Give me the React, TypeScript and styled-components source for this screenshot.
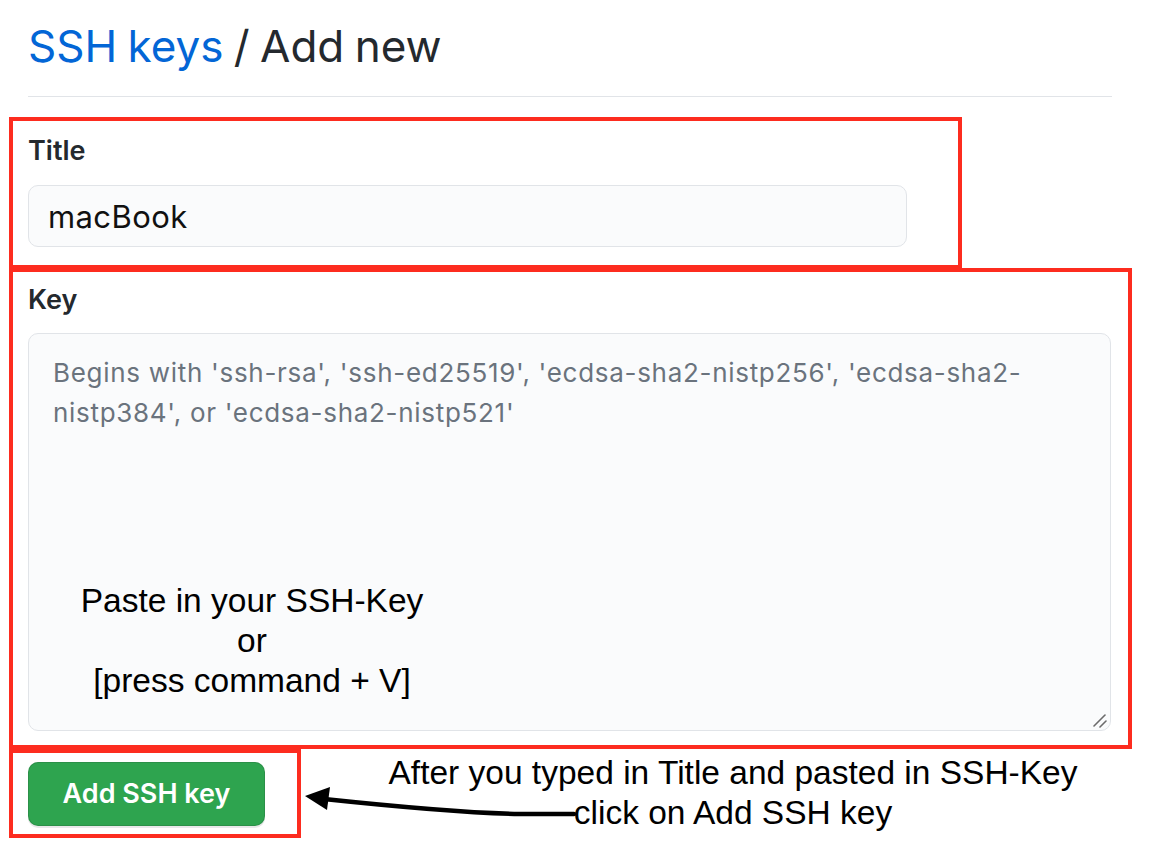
import React from "react";
import styled, { createGlobalStyle } from "styled-components";

const GlobalStyle = createGlobalStyle`
  html, body {
    margin: 0;
    padding: 0;
    background: #ffffff;
  }
  body {
    font-family: Inter, "Noto Sans", "Liberation Sans", sans-serif;
    color: #24292e;
  }
  * { box-sizing: border-box; }
`;

const RED = "#fd2c1f";

const Page = styled.div`
  padding: 19px 0 24px 9px;
  width: 1152px;
`;

const Subhead = styled.div`
  margin-left: 19px;
  width: 1084px;
  padding-bottom: 23px;
  border-bottom: 1px solid #e1e4e8;
`;

const Heading = styled.h1`
  margin: 0;
  font-family: Inter, "Liberation Sans", sans-serif;
  font-size: 44px;
  font-weight: 400;
  line-height: 54px;
  color: #24292e;
  letter-spacing: 0px;
  word-spacing: -2px;
`;

const Crumb = styled.a`
  color: #0366d6;
  text-decoration: none;
`;

const Form = styled.form`
  display: flex;
  flex-direction: column;
  align-items: flex-start;
  margin-top: 20px;
`;

const Highlight = styled.div<{ $w: number; $overlap?: number }>`
  width: ${(p) => p.$w}px;
  border: 4px solid ${RED};
  margin-top: ${(p) => -(p.$overlap ?? 0)}px;
  position: relative;
`;

const Group = styled.div<{ $top: number; $bottom: number }>`
  display: flex;
  flex-direction: column;
  align-items: flex-start;
  padding: ${(p) => p.$top}px 0 ${(p) => p.$bottom}px 15px;
`;

const Label = styled.label<{ $gap: number }>`
  display: block;
  font-family: Inter, "Liberation Sans", sans-serif;
  font-size: 27px;
  font-weight: 600;
  line-height: 32px;
  color: #24292e;
  margin-bottom: ${(p) => p.$gap}px;
`;

const TextInput = styled.input`
  width: 879px;
  height: 62px;
  padding: 0 19px;
  border: 1px solid #e1e4e8;
  border-radius: 10px;
  background: #fafbfc;
  font-family: Inter, "Liberation Sans", sans-serif;
  font-size: 31px;
  line-height: 60px;
  letter-spacing: 0.4px;
  color: #111;
  outline: none;
`;

const TextArea = styled.div`
  position: relative;
  width: 1083px;
  height: 398px;
  padding: 19px 24px;
  border: 1px solid #e1e4e8;
  border-radius: 10px;
  background: #fafbfc;
`;

const Placeholder = styled.div`
  font-family: Inter, "Liberation Sans", sans-serif;
  font-size: 26px;
  line-height: 40px;
  letter-spacing: 0.7px;
  color: #6a737d;
  white-space: nowrap;
`;

const PasteNote = styled.div`
  position: absolute;
  left: 0;
  top: 247px;
  width: 446px;
  text-align: center;
  font-family: "Liberation Sans", Arial, sans-serif;
  font-size: 33.5px;
  line-height: 40px;
  color: #000;
`;

const Grip = styled.svg`
  position: absolute;
  right: 2px;
  bottom: 2px;
`;

const ActionRow = styled.div`
  display: flex;
  align-items: flex-start;
  position: relative;
`;

const Button = styled.button`
  width: 237px;
  height: 64px;
  padding: 0;
  border: 1px solid rgba(27, 31, 35, 0.15);
  border-radius: 10px;
  background: #2ea44f;
  box-shadow: 0 2px 0 rgba(27, 31, 35, 0.1);
  color: #ffffff;
  font-family: Inter, "Liberation Sans", sans-serif;
  font-size: 27px;
  font-weight: 600;
  line-height: 62px;
  cursor: pointer;
`;

const Hint = styled.div`
  margin: 4px 0 0 72px;
  width: 720px;
  text-align: center;
  font-family: "Liberation Sans", Arial, sans-serif;
  font-size: 33.5px;
  line-height: 40px;
  color: #000;
`;

const Arrow = styled.svg`
  position: absolute;
  left: 291px;
  top: 31px;
  overflow: visible;
`;

export default function App() {
  return (
    <>
      <GlobalStyle />
      <Page>
        <Subhead>
          <Heading>
            <Crumb href="#">SSH keys</Crumb> / Add new
          </Heading>
        </Subhead>
        <Form onSubmit={(e) => e.preventDefault()}>
          <Highlight $w={953}>
            <Group $top={14} $bottom={18}>
              <Label $gap={18} htmlFor="title">Title</Label>
              <TextInput id="title" defaultValue="macBook" />
            </Group>
          </Highlight>
          <Highlight $w={1123} $overlap={1}>
            <Group $top={12} $bottom={14}>
              <Label $gap={17}>Key</Label>
              <TextArea>
                <Placeholder>
                  Begins with 'ssh-rsa', 'ssh-ed25519', 'ecdsa-sha2-nistp256', 'ecdsa-sha2-
                  <br />
                  nistp384', or 'ecdsa-sha2-nistp521'
                </Placeholder>
                <PasteNote>
                  Paste in your SSH-Key
                  <br />
                  or
                  <br />
                  [press command + V]
                </PasteNote>
                <Grip width="16" height="16" viewBox="0 0 16 16">
                  <path d="M2 14 L13 3" stroke="#6b6b6b" strokeWidth="1.6" strokeLinecap="round" />
                  <path d="M8 15 L14 9" stroke="#6b6b6b" strokeWidth="1.6" strokeLinecap="round" />
                </Grip>
              </TextArea>
            </Group>
          </Highlight>
          <ActionRow>
            <Highlight $w={292}>
              <Group $top={9} $bottom={8}>
                <Button type="submit">Add SSH key</Button>
              </Group>
            </Highlight>
            <Hint>
              After you typed in Title and pasted in SSH-Key
              <br />
              click on Add SSH key
            </Hint>
            <Arrow width="270" height="45" viewBox="0 0 270 45">
              <path
                d="M274 34 L220 34 C160 33 90 26 24 19"
                fill="none"
                stroke="#000"
                strokeWidth="4.5"
                strokeLinecap="round"
              />
              <polygon points="5,16 30,7 27,30" fill="#000" />
            </Arrow>
          </ActionRow>
        </Form>
      </Page>
    </>
  );
}
